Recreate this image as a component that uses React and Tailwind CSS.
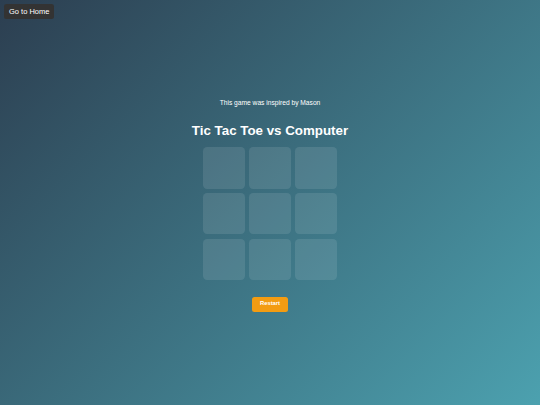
import React from "react";

export default function App() {
  const cells = Array.from({ length: 9 });
  return (
    <div
      className="relative w-full min-h-screen h-[405px] overflow-hidden bg-[linear-gradient(135deg,#2c3e50,#4ca1af)] text-white"
      style={{ fontFamily: '"Liberation Sans", Arial, sans-serif' }}
    >
      <button className="absolute left-[4px] top-[4px] h-[15.3px] px-[5px] rounded-[2.5px] bg-[#333] text-[7.5px] leading-none text-white flex items-center">
        Go to Home
      </button>
      <div className="flex flex-col items-center pt-[99px]">
        <p className="text-[6.67px] leading-[8px]">This game was inspired by Mason</p>
        <h1 className="mt-[16px] text-[13.33px] leading-[16px] font-bold">Tic Tac Toe vs Computer</h1>
        <div className="mt-[8px] grid grid-cols-[repeat(3,41.67px)] grid-rows-[repeat(3,41.67px)] gap-[4.17px]">
          {cells.map((_, i) => (
            <div key={i} className="rounded-[4.2px] bg-white/10" />
          ))}
        </div>
        <button className="mt-[16.7px] h-[14.7px] px-[8.33px] rounded-[2.5px] bg-[#f39c12] text-[5.83px] leading-none font-bold text-white flex items-center">
          Restart
        </button>
      </div>
    </div>
  );
}
